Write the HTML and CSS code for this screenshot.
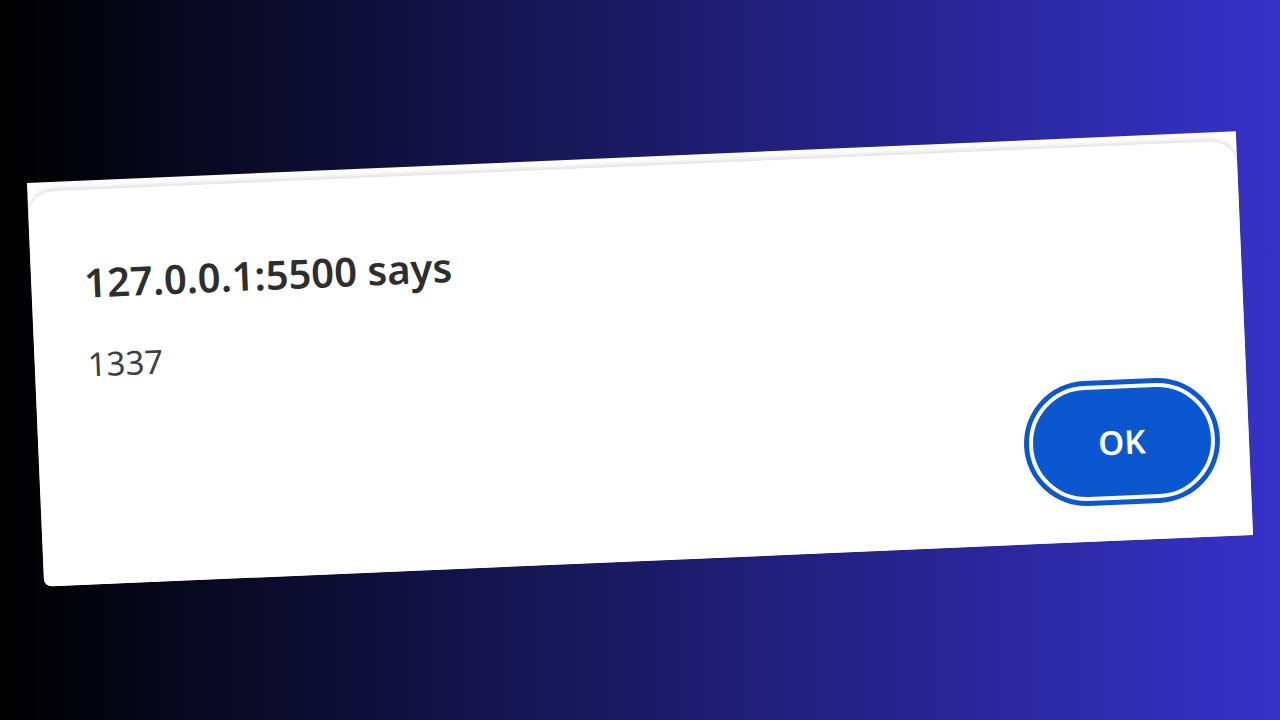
FILE: index.html
```html
<!DOCTYPE html>
<html lang="en">
<head>
<meta charset="utf-8">
<title>Alert</title>
<link rel="stylesheet" href="styles.css">
</head>
<body>
  <div class="stage">
    <div class="card">
      <div class="dialog">
        <div class="title">127.0.0.1:5500 says</div>
        <div class="message">1337</div>
        <button class="ok">OK</button>
      </div>
    </div>
  </div>
</body>
</html>
```
FILE: styles.css
```css
html, body {
  margin: 0;
  padding: 0;
}
body {
  width: 1280px;
  height: 720px;
  overflow: hidden;
  background: linear-gradient(90deg, #000000 0%, #1b1a66 50%, #3632c9 100%);
  font-family: "Noto Sans", "Open Sans", sans-serif;
}
.stage {
  width: 1280px;
  height: 720px;
  display: flex;
  align-items: center;
  justify-content: center;
}
.card {
  width: 1210px;
  height: 404px;
  margin-top: -3px;
  background: #ffffff;
  transform: rotate(-2.45deg);
  border-bottom-left-radius: 8px;
  overflow: hidden;
  display: flex;
  flex-direction: column;
}
.dialog {
  margin-top: 9px;
  flex: 1;
  background: #ffffff;
  border-radius: 26px 26px 0 0;
  box-shadow: 0 -2px 5px rgba(0, 0, 0, 0.14);
  padding: 73px 34px 41px 53px;
  display: flex;
  flex-direction: column;
  box-sizing: border-box;
}
.title {
  font-size: 40px;
  font-weight: 600;
  line-height: 1;
  color: #2e2e2e;
}
.message {
  margin-top: 45px;
  font-size: 33px;
  line-height: 1;
  color: #3c4043;
}
.ok {
  margin-top: auto;
  align-self: flex-end;
  box-sizing: border-box;
  width: 186px;
  height: 115px;
  border: 4px solid #ffffff;
  border-radius: 60px;
  background: #0b57d0;
  box-shadow: 0 0 0 5px #0b57d0;
  color: #ffffff;
  font-family: "Noto Sans", "Open Sans", sans-serif;
  font-size: 33px;
  font-weight: 600;
  padding: 0;
}
```
